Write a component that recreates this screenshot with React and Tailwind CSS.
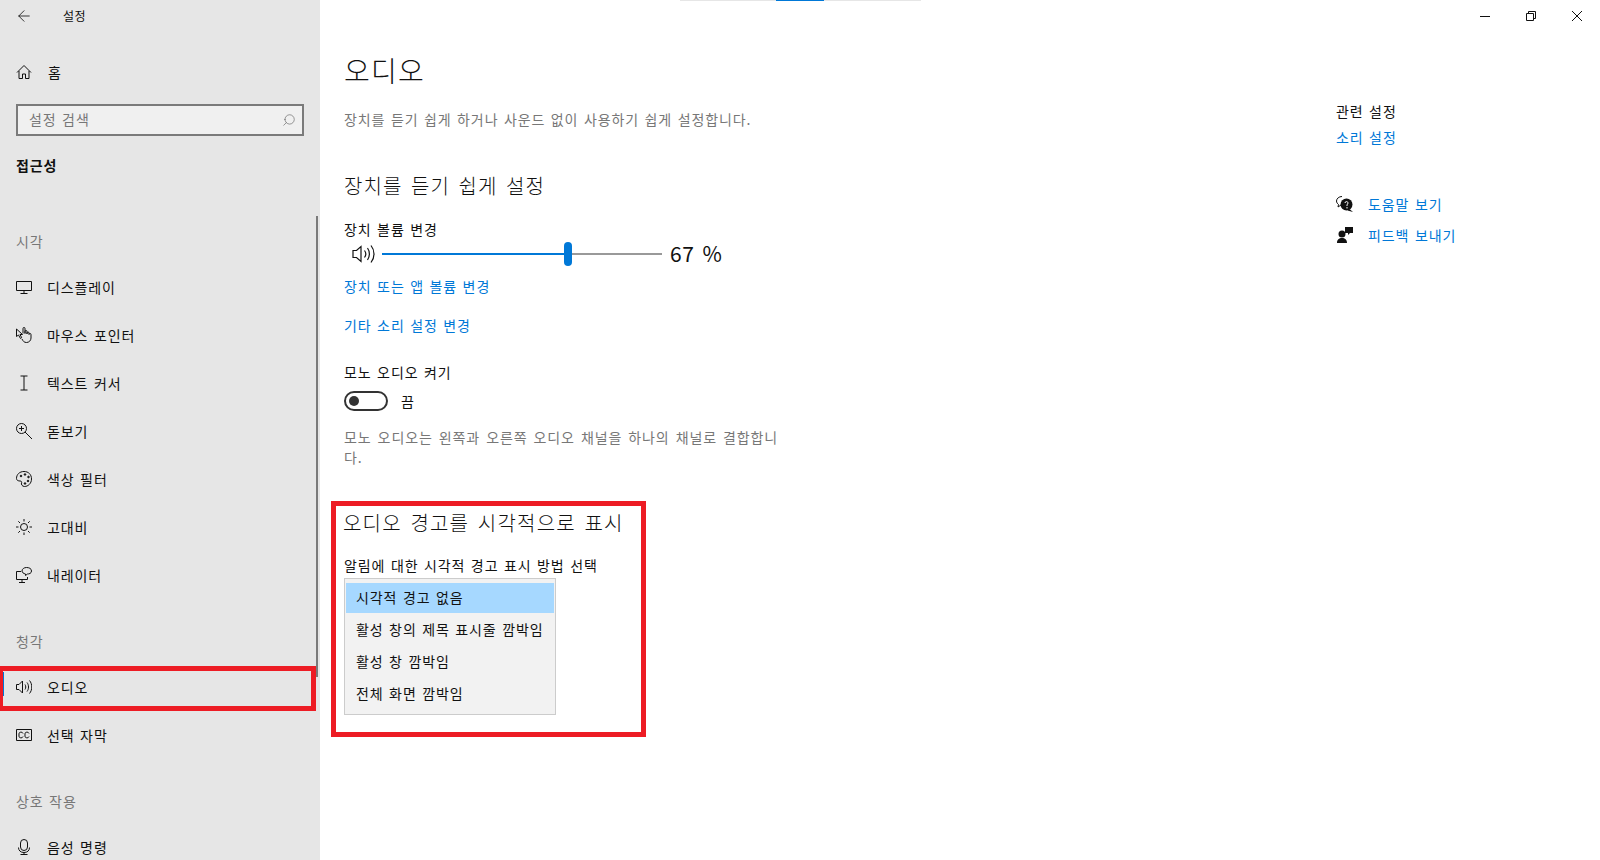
import { ArrowLeft, Search } from 'lucide-react';

const FONT = "font-['Noto_Sans_CJK_KR','Noto_Sans',sans-serif]";

function Ico({ children }) {
  return (
    <svg width="16" height="16" viewBox="0 0 16 16" fill="none" stroke="#111" strokeWidth="1" className="shrink-0">
      {children}
    </svg>
  );
}

const icons = {
  home: (
    <Ico>
      <path d="M1 8.500 8 1.500l7 7M3 7v7.500h3.500V10h3v4.500H13V7" />
    </Ico>
  ),
  display: (
    <Ico>
      <path d="M.5 2.500h15v9H.5zM8 11.500v3M4.500 14.500h7" />
    </Ico>
  ),
  pointer: (
    <Ico>
      <path d="M.5 2v7.500l2-1.500 2 3.500 1.200-.8L4 7.500h2.500z" />
      <path d="M7 6.500V1.500a1 1 0 0 1 2 0V6.500V4.500a1 1 0 0 1 2 0V7V6a1 1 0 0 1 2 0v1.500a1 1 0 0 1 2 0V11c0 2.500-2 4.500-4.500 4.500S7 14 6 12" />
    </Ico>
  ),
  cursor: (
    <Ico>
      <path d="M4.500 1h7M8 1v14M4.500 15h7" />
    </Ico>
  ),
  magnifier: (
    <Ico>
      <circle cx="5.500" cy="5.500" r="5" />
      <path d="M9 9l7 7M3 5.500h5M5.500 3v5" />
    </Ico>
  ),
  palette: (
    <Ico>
      <path d="M8 .5C3.500.5.5 3.500.5 7.500c0 2 2 2.500 3.500 2.500s2 1 1.500 2 .5 3.500 3 3.500c3.500 0 7-3 7-7.500C15.500 3.500 12.500.5 8 .5z" />
      <circle cx="5" cy="5" r=".8" fill="#111" />
      <circle cx="9" cy="3.500" r=".8" fill="#111" />
      <circle cx="12.500" cy="6" r=".8" fill="#111" />
      <circle cx="12" cy="10" r=".8" fill="#111" />
      <circle cx="9" cy="12.500" r=".8" fill="#111" />
    </Ico>
  ),
  contrast: (
    <Ico>
      <path d="M4.500 8a3.500 3.500 0 0 1 7 0M4.500 8a3.500 3.500 0 0 0 7 0" />
      <path d="M8 0v2.500M8 13.500V16M0 8h2.500M13.500 8H16M2.300 2.300 4 4M12 12l1.700 1.700M2.300 13.700 4 12M12 4l1.700-1.700" />
    </Ico>
  ),
  narrator: (
    <Ico>
      <path d="M5 4.500H.5v8h11V10M6 12.500V15M3 15.500h6" />
      <path d="M10.500.5c2.500 0 5 1 5 3.500s-2.500 3-4 3l-2 1.500V7C7.500 6.500 6 5.500 6 4c0-2 2-3.500 4.500-3.500z" />
    </Ico>
  ),
  audio: (
    <Ico>
      <path d="M.5 5.500h2.500L6.500 2v12L3 10.500H.5zM9 5.500c1 1.500 1 3.500 0 5M11 3.500c2 2.500 2 6.500 0 9M13.500 1.500c3 3.500 3 9.500 0 13" />
    </Ico>
  ),
  caption: (
    <Ico>
      <path d="M.5 2.500h15v11H.5z" />
      <path d="M7 6.500A2 2 0 0 0 3 8a2 2 0 0 0 4 1.500M13 6.500A2 2 0 0 0 9 8a2 2 0 0 0 4 1.500" />
    </Ico>
  ),
  mic: (
    <Ico>
      <rect x="4.500" y=".5" width="7" height="11" rx="3.500" />
      <path d="M2.500 8.500c0 3 2 5 5.500 5s5.500-2 5.500-5M8 13.500V16M4.500 15.500h7" />
    </Ico>
  ),
};

function NavItem({ icon, label, active }) {
  return (
    <div className="relative flex h-12 items-center pl-4 text-[14px] leading-5 tracking-[0.9px] text-[#111] [word-spacing:1.5px]">
      {icons[icon]}
      <span className="ml-[15px]">{label}</span>
      {active && (
        <>
          <div className="absolute left-[3px] top-[9px] h-6 w-px bg-[#0078d7]" />
          <div className="absolute left-0 top-[3px] h-[45px] w-[316px] border-y-[5px] border-l-[3px] border-r-[5px] border-[#ed1c24]" />
        </>
      )}
    </div>
  );
}

function GroupTitle({ children, className }) {
  return <div className={`pl-4 text-[14px] leading-5 tracking-[0.9px] text-[#777] [word-spacing:1.5px] ${className}`}>{children}</div>;
}

function Sidebar() {
  return (
    <aside className="relative h-[860px] w-[320px] shrink-0 overflow-hidden bg-[#e6e6e6]">
      <div className="flex h-8 items-center pl-[15px]">
        <ArrowLeft size={18} strokeWidth={1.100} color="#111" />
        <span className="ml-[30px] text-[12px] tracking-[0.5px] text-[#111]">설정</span>
      </div>
      <div className="mt-[20px] flex h-[40px] items-center pl-[17px] text-[14px] text-[#111]">
        <div className="-ml-px">{icons.home}</div>
        <span className="ml-[16px]">홈</span>
      </div>
      <div className="mx-4 mt-[12px] flex h-8 items-center justify-between border-2 border-[#7a7a7a] bg-[#f0f0f0] pl-[11px] pr-[6px] text-[14px] leading-[26px] tracking-[0.9px] text-[#777] [word-spacing:1.5px]">
        <span className="-mt-[2px]">설정 검색</span>
        <Search size={14} strokeWidth={1} color="#555" className="-scale-x-100" />
      </div>
      <div className="mt-[19px] pl-4 text-[14px] font-bold leading-5 tracking-[0.9px] text-[#111]">접근성</div>
      <GroupTitle className="mt-[56px]">시각</GroupTitle>
      <div className="mt-[12px]">
        <NavItem icon="display" label="디스플레이" />
        <NavItem icon="pointer" label="마우스 포인터" />
        <NavItem icon="cursor" label="텍스트 커서" />
        <NavItem icon="magnifier" label="돋보기" />
        <NavItem icon="palette" label="색상 필터" />
        <NavItem icon="contrast" label="고대비" />
        <NavItem icon="narrator" label="내레이터" />
      </div>
      <GroupTitle className="mt-[32px]">청각</GroupTitle>
      <div className="mt-[12px]">
        <NavItem icon="audio" label="오디오" active />
        <NavItem icon="caption" label="선택 자막" />
      </div>
      <GroupTitle className="mt-[32px]">상호 작용</GroupTitle>
      <div className="mt-[12px]">
        <NavItem icon="mic" label="음성 명령" />
      </div>
      {/* scrollbar */}
      <div className="absolute left-[316px] top-[216px] h-[461px] w-[2px] bg-[#7a7a7a]" />
    </aside>
  );
}

function Link({ children, className }) {
  return <div className={`text-[14px] leading-5 tracking-[0.9px] text-[#0078d7] [word-spacing:1.5px] ${className}`}>{children}</div>;
}

function Content() {
  return (
    <main className="w-[480px] shrink-0 pl-6 text-[#111]">
      <h1 className="mt-[50px] text-[28px] font-light leading-10 tracking-[1.300px]">오디오</h1>
      <p className="mt-[19px] text-[14px] leading-5 tracking-[0.9px] text-[#777] [word-spacing:1.5px]">
        장치를 듣기 쉽게 하거나 사운드 없이 사용하기 쉽게 설정합니다.
      </p>
      <h2 className="mt-[42px] text-[20px] font-light leading-[30px] tracking-[1.100px] [word-spacing:3px]">장치를 듣기 쉽게 설정</h2>
      <div className="mt-[18px] text-[14px] leading-5 tracking-[0.9px] [word-spacing:1.5px]">장치 볼륨 변경</div>
      <div className="flex h-[30px] items-center pl-2">
        <svg width="24" height="20" viewBox="0 0 24 20" fill="none" stroke="#111" strokeWidth="1.200">
          <path d="M1 6.500h3.500L9 2.500v15L4.500 13.500H1zM12.500 6.500c1.500 2 1.500 5 0 7M15.500 4c2.500 3.500 2.500 8.500 0 12M19 1.500c4 5 4 12 0 17" />
        </svg>
        <div className="relative ml-[6px] h-[2px] w-[280px] bg-[#999]">
          <div className="h-full w-[182px] bg-[#0078d7]" />
          <div className="absolute left-[182px] top-[-11px] h-6 w-2 rounded-full bg-[#0078d7]" />
        </div>
        <span className="ml-2 text-[21px] tracking-[0.5px] [word-spacing:3px]">67 %</span>
      </div>
      <Link className="mt-[7px]">장치 또는 앱 볼륨 변경</Link>
      <Link className="mt-[19px]">기타 소리 설정 변경</Link>
      <div className="mt-[27px] text-[14px] leading-5 tracking-[0.9px] [word-spacing:1.5px]">모노 오디오 켜기</div>
      <div className="mt-[9px] flex h-5 items-center">
        <div className="flex h-5 w-11 items-center rounded-full border-2 border-[#333] pl-[3px]">
          <div className="h-[10px] w-[10px] rounded-full bg-[#333]" />
        </div>
        <span className="ml-[13px] text-[14px]">끔</span>
      </div>
      <p className="mt-[16px] w-[440px] text-[14px] leading-5 tracking-[0.9px] text-[#777] [word-spacing:2px]">
        모노 오디오는 왼쪽과 오른쪽 오디오 채널을 하나의 채널로 결합합니다.
      </p>
      <section className="-ml-[13px] mt-[34px] h-[236px] w-[315px] border-[5px] border-[#ed1c24] pl-[8px]">
        <h2 className="-ml-px mt-[2px] text-[20px] font-light leading-[30px] tracking-[1.200px] [word-spacing:3px]">오디오 경고를 시각적으로 표시</h2>
        <div className="mt-[17px] text-[14px] leading-5 tracking-[0.9px] [word-spacing:1.5px]">알림에 대한 시각적 경고 표시 방법 선택</div>
        <div className="mt-[3px] h-[137px] w-[212px] border border-[#ccc] bg-[#f2f2f2] px-px pt-[4px] text-[14px] tracking-[0.9px] [word-spacing:1.5px]">
          <div className="flex h-[30px] items-center bg-[#a6d8ff] pl-[10px]">
            <span className="-mt-px">시각적 경고 없음</span>
          </div>
          <div className="flex h-[32px] items-center pl-[10px]">활성 창의 제목 표시줄 깜박임</div>
          <div className="flex h-[32px] items-center pl-[10px]">활성 창 깜박임</div>
          <div className="flex h-[32px] items-center pl-[10px]">전체 화면 깜박임</div>
        </div>
      </section>
    </main>
  );
}

function RightColumn() {
  return (
    <div className="ml-[536px] w-[200px] text-[14px] leading-5 tracking-[0.9px] [word-spacing:1.5px]">
      <div className="mt-[101px] text-[#111]">관련 설정</div>
      <Link className="mt-[6px]">소리 설정</Link>
      <div className="mt-[47px] flex h-5 items-center">
        <svg width="18" height="16" viewBox="0 0 18 16" className="shrink-0">
          <path d="M6 .5C3 .5.5 2.500.5 5c0 1.500 1 2.800 2 3.500L2 11l3-2" fill="none" stroke="#111" />
          <circle cx="10.500" cy="8.500" r="6" fill="#111" />
          <path d="M13.500 13l3.500 3-5.500-1.500z" fill="#111" />
          <path d="M9 7a1.500 1.500 0 1 1 2 1.500V10M11 11v1.500" stroke="#fff" fill="none" />
        </svg>
        <Link className="ml-[14px]">도움말 보기</Link>
      </div>
      <div className="mt-[11px] flex h-5 items-center">
        <svg width="18" height="16" viewBox="0 0 18 16" fill="#111" className="shrink-0">
          <circle cx="6" cy="7" r="3.500" />
          <path d="M1 16c0-3.500 2-5 5-5s5 1.500 5 5zM9 0h8v6h-3l-2 2V6H9z" />
        </svg>
        <Link className="ml-[14px]">피드백 보내기</Link>
      </div>
    </div>
  );
}

function WindowControls() {
  return (
    <div className="absolute right-0 top-0 flex h-8 text-[#111]">
      <div className="flex w-[46px] items-center justify-center">
        <div className="h-px w-[10px] bg-[#111]" />
      </div>
      <div className="flex w-[46px] items-center justify-center">
        <svg width="10" height="10" viewBox="0 0 10 10" fill="none" stroke="#111">
          <path d="M.5 2.500h7v7h-7zM2.500 2.500V.5h7v7h-2" />
        </svg>
      </div>
      <div className="flex w-[46px] items-center justify-center">
        <svg width="10" height="10" viewBox="0 0 10 10" fill="none" stroke="#111">
          <path d="M0 0l10 10M10 0 0 10" />
        </svg>
      </div>
    </div>
  );
}

export default function App() {
  return (
    <div className={`relative flex h-[860px] w-[1600px] overflow-hidden bg-white ${FONT}`}>
      <Sidebar />
      <Content />
      <RightColumn />
      {/* page scroll indicator at the very top */}
      <div className="absolute left-[680px] top-0 flex h-px w-[241px] bg-[#e6e6e6]">
        <div className="ml-[96px] h-px w-[48px] bg-[#0078d7]" />
      </div>
      <WindowControls />
    </div>
  );
}
